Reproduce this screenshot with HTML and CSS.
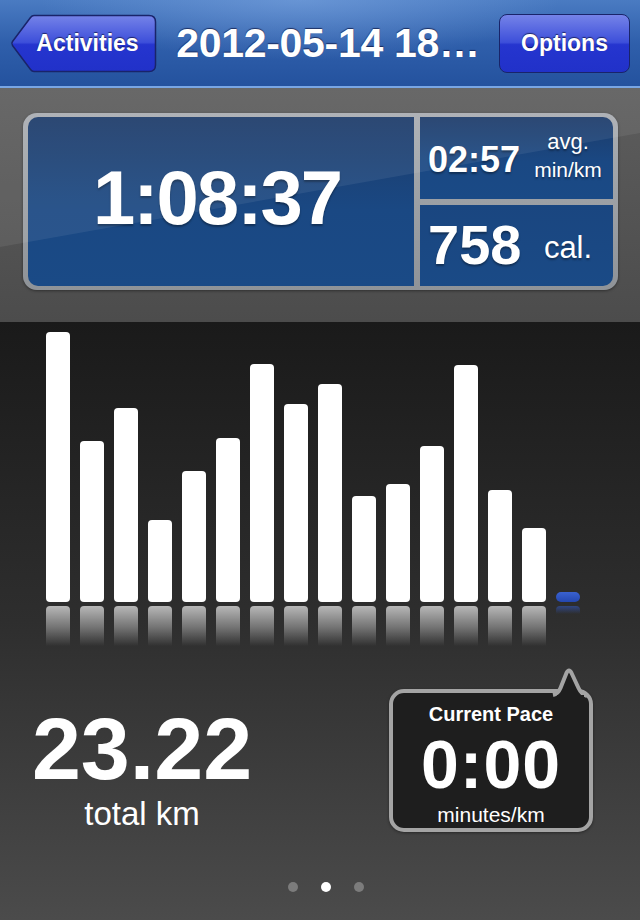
FILE: index.html
```html
<!DOCTYPE html>
<html lang="en">
<head>
<meta charset="UTF-8" />
<meta name="viewport" content="width=device-width, initial-scale=1" />
<title>2012-05-14 18:00</title>
<link rel="stylesheet" href="styles.css">
</head>
<body>

<header class="navbar">
  <button class="back-btn">
    <svg class="back-shape" width="147" height="59" viewBox="0 0 147 59">
      <defs>
        <linearGradient id="backFill" x1="0" y1="0" x2="0" y2="1">
          <stop offset="0" stop-color="#7583e8"/>
          <stop offset="0.48" stop-color="#3d4fda"/>
          <stop offset="0.52" stop-color="#2535cf"/>
          <stop offset="1" stop-color="#2131c9"/>
        </linearGradient>
      </defs>
      <path d="M24 1.5 H139 Q145.5 1.5 145.5 8 V51 Q145.5 57.5 139 57.5 H24 Q22 57.5 20.5 55.5 L2.5 31.5 Q1 29.5 2.5 27.5 L20.5 3.5 Q22 1.5 24 1.5 Z"
            fill="url(#backFill)" stroke="#19246a" stroke-width="1.5"/>
    </svg>
    <span>Activities</span>
  </button>
  <h1 class="title">2012-05-14 18…</h1>
  <button class="nav-btn">Options</button>
</header>

<section class="overview">
  <div class="panel">
    <div class="cell cell-time">1:08:37</div>
    <div class="cell cell-side cell-top">
      <span class="num num-pace">02:57</span>
      <span class="unit unit-pace"><span>avg.</span><span>min/km</span></span>
    </div>
    <div class="cell cell-side cell-bottom">
      <span class="num num-cal">758</span>
      <span class="unit unit-cal">cal.</span>
    </div>
  </div>
</section>

<section class="chart">
  <div class="bars">
    <div class="bar" style="height:270px"></div>
    <div class="bar" style="height:161px"></div>
    <div class="bar" style="height:194px"></div>
    <div class="bar" style="height:82px"></div>
    <div class="bar" style="height:131px"></div>
    <div class="bar" style="height:164px"></div>
    <div class="bar" style="height:238px"></div>
    <div class="bar" style="height:198px"></div>
    <div class="bar" style="height:218px"></div>
    <div class="bar" style="height:106px"></div>
    <div class="bar" style="height:118px"></div>
    <div class="bar" style="height:156px"></div>
    <div class="bar" style="height:237px"></div>
    <div class="bar" style="height:112px"></div>
    <div class="bar" style="height:74px"></div>
    <div class="bar bar-current"></div>
  </div>
  <div class="reflections">
    <div class="reflect"></div><div class="reflect"></div><div class="reflect"></div>
    <div class="reflect"></div><div class="reflect"></div><div class="reflect"></div>
    <div class="reflect"></div><div class="reflect"></div><div class="reflect"></div>
    <div class="reflect"></div><div class="reflect"></div><div class="reflect"></div>
    <div class="reflect"></div><div class="reflect"></div><div class="reflect"></div>
    <div class="reflect reflect-current"></div>
  </div>

  <div class="totals">
    <div class="distance">
      <div class="distance-value">23.22</div>
      <div class="distance-label">total km</div>
    </div>
    <div class="bubble">
      <svg class="bubble-tail" width="44" height="40" viewBox="0 0 44 40">
        <path d="M5 32 Q 10 31 12.5 25 L 18.5 10 Q 21 5 23.5 10 L 30.5 25 Q 33.5 31.5 39 33"
              fill="#1e1e1e" stroke="#a4a4a4" stroke-width="4" stroke-linejoin="round"/>
        <rect x="9" y="32" width="27" height="8" fill="#1e1e1e"/>
      </svg>
      <div class="bubble-title">Current Pace</div>
      <div class="bubble-value">0:00</div>
      <div class="bubble-unit">minutes/km</div>
    </div>
  </div>

  <div class="dots">
    <span class="dot"></span>
    <span class="dot active"></span>
    <span class="dot"></span>
  </div>
</section>

</body>
</html>
```

FILE: styles.css
```css
body {
  margin: 0;
  width: 640px;
  height: 920px;
  overflow: hidden;
  font-family: 'Liberation Sans', Arial, Helvetica, sans-serif;
  color: #fff;
  background: #1a1a1a;
}

/* top bar */
.navbar {
  height: 86px;
  display: flex;
  align-items: center;
  padding: 0 10px;
  background:
    radial-gradient(ellipse 260px 60px at 300px 0, rgba(140, 180, 235, 0.45), rgba(140, 180, 235, 0) 100%),
    linear-gradient(#4a7bc2, #2f5fab 50%, #24529e);
  border-bottom: 2px solid #79a6e4;
}

.back-btn {
  position: relative;
  width: 147px;
  height: 59px;
  padding: 0 0 0 8px;
  border: none;
  background: none;
  display: flex;
  align-items: center;
  justify-content: center;
  font-family: inherit;
  font-size: 23px;
  font-weight: 700;
  color: #fff;
  text-shadow: 0 -1px 1px rgba(0, 0, 30, 0.6);
}

.back-shape {
  position: absolute;
  left: 0;
  top: 0;
}

.back-btn span {
  position: relative;
}

.title {
  flex: 1;
  margin: 0;
  text-align: center;
  font-size: 41px;
  font-weight: 700;
  letter-spacing: -0.3px;
  text-shadow: 0 -1px 1px rgba(0, 0, 40, 0.6);
  white-space: nowrap;
}

.nav-btn {
  width: 131px;
  height: 59px;
  border: 1.5px solid #19246a;
  border-radius: 8px;
  background: linear-gradient(#7583e8, #3d4fda 48%, #2535cf 52%, #2131c9);
  font-family: inherit;
  font-size: 23px;
  font-weight: 700;
  color: #fff;
  text-shadow: 0 -1px 1px rgba(0, 0, 30, 0.6);
}

/* summary panel */
.overview {
  position: relative;
  height: 234px;
  padding: 25px 22px 0 23px;
  box-sizing: border-box;
  background: linear-gradient(#5d5d5d, #4c4c4c);
}

.overview::after {
  content: '';
  position: absolute;
  inset: 0;
  background: rgba(255, 255, 255, 0.07);
  clip-path: polygon(0 0, 100% 0, 100% 45px, 0 159px);
  pointer-events: none;
}

.panel {
  display: grid;
  grid-template-columns: 386px 193px;
  grid-template-rows: 82px 81px;
  gap: 6px;
  padding: 4px 5px;
  background: linear-gradient(#a9adb2, #8f9398);
  border-radius: 14px;
  box-shadow: 0 1px 3px rgba(0, 0, 0, 0.4);
}

.cell {
  display: flex;
  align-items: center;
  background: linear-gradient(#1c3b69, #1a4883 55%, #1a4a86);
  text-shadow: 0 2px 2px rgba(0, 0, 0, 0.35);
}

.cell-time {
  grid-row: span 2;
  justify-content: center;
  padding: 0 8px 8px 0;
  box-sizing: border-box;
  border-radius: 10px 0 0 10px;
  font-size: 76px;
  font-weight: 700;
  letter-spacing: -2px;
}

.cell-side {
  padding: 0 10px 0 8px;
}

.cell-top {
  border-radius: 0 10px 0 0;
}

.cell-bottom {
  border-radius: 0 0 10px 0;
  background: linear-gradient(#1a4680, #1a4a86);
}

.num {
  font-weight: 700;
  line-height: 1;
}

.num-pace {
  font-size: 36px;
  margin-top: 3px;
}

.num-cal {
  font-size: 56px;
  margin-top: -2px;
}

.unit {
  margin-left: auto;
  width: 70px;
  text-align: center;
  font-weight: 400;
}

.unit-pace {
  display: flex;
  flex-direction: column;
  font-size: 21px;
  line-height: 28px;
  margin-top: -5px;
}

.unit-pace span:first-child {
  font-size: 22px;
}

.unit-cal {
  font-size: 31px;
  margin-top: 4px;
}

/* chart */
.chart {
  height: 598px;
  padding-top: 10px;
  box-sizing: border-box;
  background: linear-gradient(#1a1a1a, #2e2e2e 50%, #4b4b4b);
}

.bars,
.reflections {
  display: flex;
  gap: 10px;
  padding-left: 46px;
}

.bars {
  height: 270px;
  align-items: flex-end;
}

.bar {
  width: 24px;
  background: #fff;
  border-radius: 4px;
}

.bar-current {
  height: 10px;
  border-radius: 5px;
  background: linear-gradient(#3a62d0, #2447b0);
}

.reflections {
  height: 40px;
  margin-top: 4px;
}

.reflect {
  width: 24px;
  border-radius: 4px 4px 0 0;
  background: linear-gradient(rgba(255, 255, 255, 0.66), rgba(255, 255, 255, 0.32) 55%, rgba(255, 255, 255, 0));
}

.reflect-current {
  height: 8px;
  background: linear-gradient(rgba(50, 90, 200, 0.55), rgba(50, 90, 200, 0));
}

.totals {
  display: flex;
  margin-top: 43px;
}

.distance {
  width: 284px;
  padding-top: 16px;
  text-align: center;
}

.distance-value {
  font-size: 88px;
  font-weight: 700;
  line-height: 1;
}

.distance-label {
  margin-top: 4px;
  font-size: 33px;
  line-height: 1;
}

.bubble {
  position: relative;
  width: 204px;
  height: 143px;
  margin-left: 105px;
  box-sizing: border-box;
  padding-top: 10px;
  border: 4px solid #a4a4a4;
  border-radius: 15px;
  background: #1e1e1e;
  box-shadow: 0 1px 3px rgba(0, 0, 0, 0.4);
  text-align: center;
}

.bubble-tail {
  position: absolute;
  left: 155px;
  top: -30px;
}

.bubble-title {
  font-size: 20px;
  font-weight: 700;
  line-height: 1.12;
}

.bubble-value {
  margin-top: 1px;
  font-size: 68px;
  font-weight: 700;
  letter-spacing: 1px;
  line-height: 1.12;
}

.bubble-unit {
  font-size: 21px;
  line-height: 1.12;
}

.dots {
  display: flex;
  justify-content: center;
  gap: 23px;
  margin-top: 50px;
  padding-left: 12px;
}

.dot {
  width: 10px;
  height: 10px;
  border-radius: 50%;
  background: #7c7c7c;
}

.dot.active {
  background: #fff;
}
```
